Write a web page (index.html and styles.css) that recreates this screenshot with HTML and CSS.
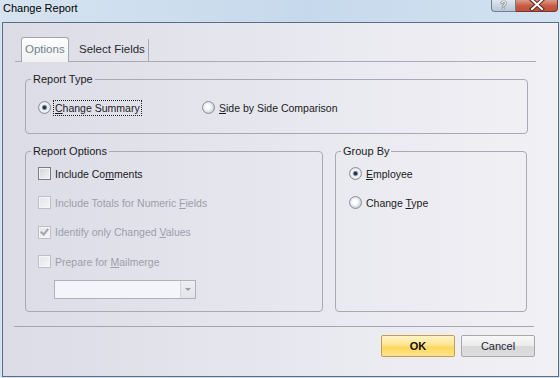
FILE: index.html
```html
<!DOCTYPE html>
<html lang="en">
<head>
  <meta charset="UTF-8" />
  <title>Change Report</title>
  <link rel="stylesheet" href="styles.css">
</head>
<body>
  <div class="window">
    <div class="titlebar">
      <span class="title">Change Report</span>
      <div class="caption">
        <span class="cap-help">?</span>
        <span class="cap-close">
          <svg width="18" height="11" viewBox="0 0 18 11">
            <path d="M4 0 L14 9 M14 0 L4 9" stroke="#5a2a22" stroke-width="4" stroke-linecap="square"/>
            <path d="M4 0 L14 9 M14 0 L4 9" stroke="#ffffff" stroke-width="2" stroke-linecap="square"/>
          </svg>
        </span>
      </div>
    </div>

    <div class="client">
      <div class="tabstrip">
        <div class="tab active">Options</div>
        <div class="tab">Select Fields</div>
      </div>

      <div class="page">
        <fieldset class="group report-type">
          <legend>Report Type</legend>
          <div class="radio-line">
            <div class="opt first">
              <span class="rb on"></span>
              <span class="focus"><u>C</u>hange Summary</span>
            </div>
            <div class="opt">
              <span class="rb"></span>
              <span><u>S</u>ide by Side Comparison</span>
            </div>
          </div>
        </fieldset>

        <div class="lower">
          <fieldset class="group report-options">
            <legend>Report Options</legend>
            <div class="check-list">
              <div class="opt"><span class="cb"></span><span>Include Co<u>m</u>ments</span></div>
              <div class="opt off"><span class="cb"></span><span>Include Totals for Numeric <u>F</u>ields</span></div>
              <div class="opt off"><span class="cb checked"></span><span>Identify only Changed <u>V</u>alues</span></div>
              <div class="opt off"><span class="cb"></span><span>Prepare for <u>M</u>ailmerge</span></div>
            </div>
            <div class="combo">
              <span class="combo-text"></span>
              <span class="combo-btn"></span>
            </div>
          </fieldset>

          <fieldset class="group group-by">
            <legend>Group By</legend>
            <div class="check-list">
              <div class="opt"><span class="rb on"></span><span><u>E</u>mployee</span></div>
              <div class="opt"><span class="rb"></span><span>Change <u>T</u>ype</span></div>
            </div>
          </fieldset>
        </div>
      </div>

      <div class="separator"></div>

      <div class="buttons">
        <button class="btn ok">OK</button>
        <button class="btn">Cancel</button>
      </div>
    </div>
  </div>
</body>
</html>
```

FILE: styles.css
```css
* { box-sizing: border-box; }
body { margin: 0; font-family: "Liberation Sans", Arial, sans-serif; font-size: 10.5px; color: #1b1b1b; }

.window { width: 560px; height: 378px; display: flex; flex-direction: column; overflow: hidden; background: linear-gradient(90deg, #d6e3f0, #c6d9ec 55%, #d2e2f1); }

.titlebar { height: 22px; flex: none; display: flex; justify-content: space-between; align-items: flex-start; }
.title { font-size: 11px; padding: 2px 0 0 3px; color: #000; }
.caption { display: flex; margin-right: 2px; }
.cap-help { width: 25px; height: 12px; border: 1px solid #6f7f93; border-top: none; border-radius: 0 0 0 4px; background: linear-gradient(#dfe7f0, #b9c7d6); color: #f4f6f8; font-weight: bold; font-size: 10px; line-height: 11px; text-align: center; text-shadow: 0 0 1px #333, 0 0 1px #333; }
.cap-close { width: 42px; height: 12px; border: 1px solid #6e3a31; border-top: none; border-left: none; border-radius: 0 0 4px 0; background: linear-gradient(#dd9a8a, #c55a44 55%, #c44d36); display: flex; justify-content: center; }

.client { flex: 1; margin: 0 1px 1px 2px; border: 1px solid #5d6e83; background: linear-gradient(90deg, #dcdce7, #e9e9f0 60%, #f1f1f5); display: flex; flex-direction: column; }

.tabstrip { margin: 14px 22px 0 12px; padding-left: 6px; height: 25px; border-bottom: 1px solid #a9acb4; display: flex; align-items: flex-end; }
.tab { height: 22px; width: 80px; padding-left: 10px; border-right: 1px solid #a9acb4; font-size: 11.5px; line-height: 21px; color: #2a2a2a; }
.tab.active { height: 25px; width: 48px; margin-bottom: -1px; padding-left: 3px; border: 1px solid #a3a6ae; border-bottom: none; border-radius: 3px 3px 0 0; background: linear-gradient(#fefefe, #f1f1f4); color: #737f8e; line-height: 22px; }

.page { padding: 11px 0 0 22px; }

.group { margin: 0; padding: 0 5px; border: 1px solid #a7aab2; border-radius: 4px; min-width: 0; }
.group legend { padding: 0 2px; font-size: 11px; line-height: 13px; color: #1b1b1b; }

.report-type { width: 503px; height: 61px; }
.radio-line { display: flex; margin: 14px 0 0 7px; }
.opt { display: flex; align-items: center; height: 15px; gap: 4px; }
.opt.first { width: 164px; }
.opt.off { color: #9d9ea8; }
.focus { outline: 1px dotted #222; outline-offset: 1px; }

.lower { display: flex; gap: 12px; margin-top: 11px; }
.report-options { width: 298px; height: 167px; }
.group-by { width: 192px; height: 167px; }
.check-list { display: flex; flex-direction: column; gap: 14.4px; margin: 8px 0 0 7px; }
.group-by .check-list { margin-left: 8px; }

.cb { width: 13px; height: 13px; flex: none; border: 1px solid #7b7d80; background: linear-gradient(135deg, #d4d5d8, #f5f5f7); box-shadow: inset 0 0 0 1px #f2f2f4; }
.off .cb { border-color: #bdbec6; background: linear-gradient(135deg, #e4e4ea, #f6f6f8); box-shadow: inset 0 0 0 1px #f5f5f7; }
.cb.checked { display: flex; align-items: center; justify-content: center; }
.cb.checked::after { content: ""; width: 3px; height: 6px; margin-top: -2px; border: solid #a2a4ad; border-width: 0 2px 2px 0; transform: rotate(40deg); }

.rb { width: 13px; height: 13px; flex: none; border-radius: 50%; border: 1px solid #8c9097; background: radial-gradient(circle at 45% 45%, #ffffff 0 2px, #e9ecf0 4px, #c9cfd7 6px); }
.rb.on { background: radial-gradient(circle at 50% 50%, #2a2f3a 0 1.2px, #6f84a0 2px, #e4e8ee 3px, #f6f7f9 4px, #cbd0d7 6px); }

.combo { display: flex; width: 142px; height: 19px; margin: 11px 0 0 23px; border: 1px solid #aeb2bc; background: #f3f5fa; }
.combo-text { flex: 1; }
.combo-btn { width: 15px; border-left: 1px solid #d2d5dc; background: linear-gradient(#edeef2, #e2e4e9); display: flex; align-items: center; justify-content: center; }
.combo-btn::after { content: ""; border: 3px solid transparent; border-top: 3px solid #9a9ca4; margin-top: 3px; }

.separator { margin: 14px 0 0 11px; width: 520px; height: 1px; background: #a4a7af; }

.buttons { display: flex; justify-content: flex-end; gap: 6px; margin: 8px 23px 0 0; }
.btn { width: 74px; height: 22px; padding: 0; font-family: "Liberation Sans", Arial, sans-serif; font-size: 11px; color: #1d2639; border: 1px solid #a6a8ad; border-radius: 2px; background: linear-gradient(#f8f8f8, #ececec 48%, #d9d9d9 52%, #dddddd); }
.btn.ok { font-weight: bold; color: #111; border-color: #c49c55; background: linear-gradient(#fff3c4, #fee592 45%, #fcd85c 55%, #fee38a); }
```
